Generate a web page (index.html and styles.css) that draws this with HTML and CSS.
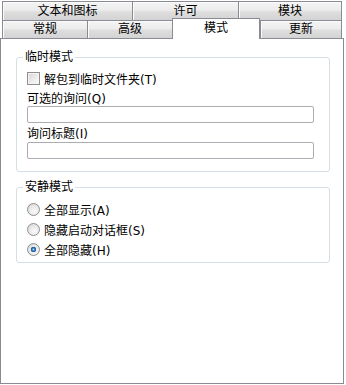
FILE: index.html
```
<!doctype html>
<html lang="zh-CN">
    <head>
        <meta charset="UTF-8" />
        <title>模式</title>
        <link rel="stylesheet" href="styles.css">
    </head>
    <body>
        <div class="tabs">
            <div class="tab-row tab-row-back">
                <div class="tab tab-text">文本和图标</div>
                <div class="tab tab-license">许可</div>
                <div class="tab tab-modules tab-last">模块</div>
            </div>
            <div class="tab-row tab-row-front">
                <div class="tab tab-general">常规</div>
                <div class="tab tab-advanced">高级</div>
                <div class="tab tab-mode tab-active">模式</div>
                <div class="tab tab-update tab-last">更新</div>
            </div>
        </div>

        <div class="panel">
            <!-- 临时模式 -->
            <fieldset class="group group-temp">
                <legend>临时模式</legend>
                <label class="check-row">
                    <span class="checkbox"></span>解包到临时文件夹(T)
                </label>
                <div class="field-label">可选的询问(Q)</div>
                <div class="text-input"></div>
                <div class="field-label field-label-second">询问标题(I)</div>
                <div class="text-input"></div>
            </fieldset>

            <!-- 安静模式 -->
            <fieldset class="group group-silent">
                <legend>安静模式</legend>
                <label class="radio-row">
                    <span class="radio"></span>全部显示(A)
                </label>
                <label class="radio-row">
                    <span class="radio"></span>隐藏启动对话框(S)
                </label>
                <label class="radio-row">
                    <span class="radio radio-checked"></span>全部隐藏(H)
                </label>
            </fieldset>
        </div>
    </body>
</html>
```

FILE: styles.css
```
html {
    height: 100%;
}

body {
    margin: 0;
    padding: 0;
    background: #ffffff;
    color: #000000;
    font-family: "DejaVu Sans", "Noto Sans CJK SC", sans-serif;
    font-size: 12px;
    user-select: none;
}

/* Tab strip */
.tabs {
    padding: 1px 0 0 2px;
}

.tab-row {
    display: flex;
}

.tab {
    box-sizing: border-box;
    border-left: 1px solid #898c95;
    border-top: 1px solid #898c95;
    background: linear-gradient(to bottom, #f4f4f4 0%, #ececec 45%, #dedede 55%, #d3d3d3 100%);
    box-shadow: inset 1px 1px 0 #fbfbfb;
    text-align: center;
    white-space: nowrap;
}

.tab-last {
    border-right: 1px solid #898c95;
}

.tab-row-back .tab {
    height: 19px;
    line-height: 18px;
}

.tab-row-front .tab {
    height: 18px;
    line-height: 17px;
}

.tab-text {
    width: 130px;
}

.tab-license {
    width: 106px;
}

.tab-modules {
    width: 104px;
}

.tab-general {
    width: 85px;
}

.tab-advanced {
    width: 85px;
}

.tab-mode {
    width: 88px;
}

.tab-update {
    width: 82px;
}

.tab-row-front .tab-active {
    position: relative;
    z-index: 1;
    height: 21px;
    margin-top: -2px;
    margin-bottom: -1px;
    padding-bottom: 2px;
    line-height: 18px;
    border-right: 1px solid #898c95;
    background: #ffffff;
    box-shadow: none;
}

/* Page panel */
.panel {
    box-sizing: border-box;
    width: 344px;
    height: 346px;
    border: 1px solid #898c95;
    background: #ffffff;
    padding-top: 11px;
}

.group {
    margin: 0 13px 0 15px;
    padding: 0 15px 12px 10px;
    min-inline-size: 0;
    border: 1px solid #d5dfe5;
    border-radius: 3px;
}

.group legend {
    margin-left: -4px;
    padding: 0 2px;
    line-height: 15px;
}

.group-silent {
    margin-top: 8px;
    padding-top: 4px;
    padding-bottom: 3px;
}

.check-row,
.radio-row {
    display: flex;
    align-items: center;
    gap: 4px;
}

.check-row {
    height: 14px;
    margin-top: 6px;
}

.radio-row {
    height: 20px;
}

.checkbox {
    box-sizing: border-box;
    width: 13px;
    height: 13px;
    border: 1px solid #8e8f8f;
    background: linear-gradient(135deg, #d6d6d6 0%, #eeeeee 60%, #fafafa 100%);
    box-shadow: inset 0 0 0 1px #f4f4f4;
}

.radio {
    box-sizing: border-box;
    width: 13px;
    height: 13px;
    border: 1px solid #8e8f8f;
    border-radius: 50%;
    background: radial-gradient(circle at 60% 65%, #fbfbfb 0%, #e6e6e6 55%, #d0d0d0 100%);
}

.radio-checked {
    background:
        radial-gradient(circle 3px at 5.5px 5.5px, #9fd0f5 0%, #3a85cc 45%, #1d4f8e 85%, rgba(29, 79, 142, 0) 100%),
        radial-gradient(circle at 60% 65%, #fbfbfb 0%, #e6e6e6 55%, #d0d0d0 100%);
}

.field-label {
    height: 14px;
    line-height: 14px;
    margin-top: 7px;
}

.field-label-second {
    margin-top: 4px;
}

.text-input {
    box-sizing: border-box;
    height: 17px;
    border: 1px solid #abadb3;
    border-radius: 2px;
    background: #ffffff;
}

.field-label-second + .text-input {
    margin-top: 1px;
}
```
